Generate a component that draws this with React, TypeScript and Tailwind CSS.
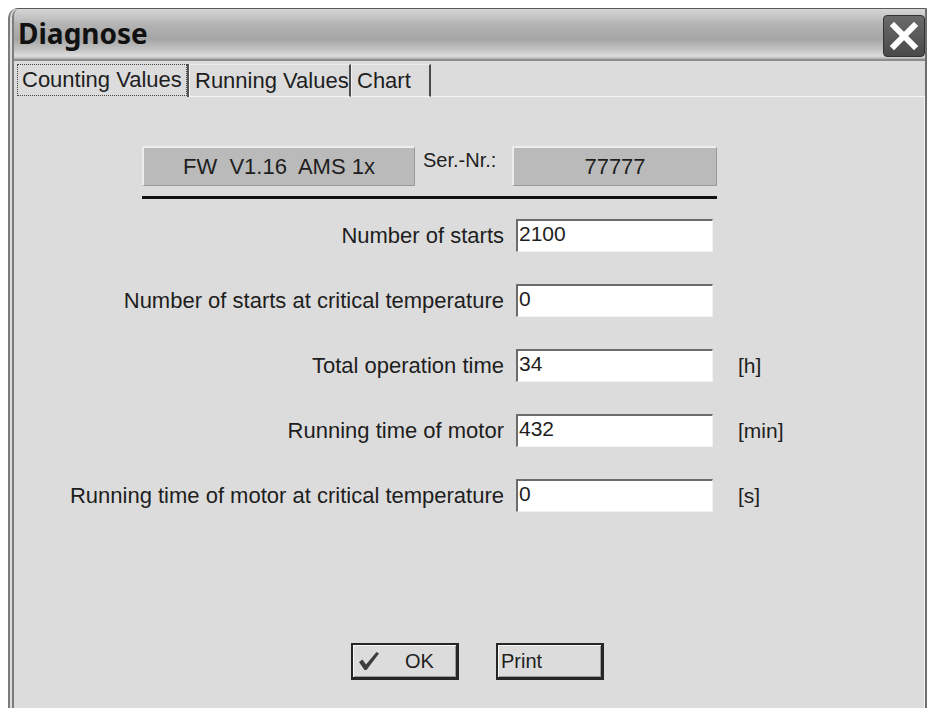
import { useState } from 'react';

type Row = { label: string; value: string; unit?: string };

const rows: Row[] = [
  { label: 'Number of starts', value: '2100' },
  { label: 'Number of starts at critical temperature', value: '0' },
  { label: 'Total operation time', value: '34', unit: '[h]' },
  { label: 'Running time of motor', value: '432', unit: '[min]' },
  { label: 'Running time of motor at critical temperature', value: '0', unit: '[s]' },
];

const tabs = ['Counting Values', 'Running Values', 'Chart'];

function CheckMark() {
  return (
    <svg width="22" height="20" viewBox="0 0 22 20" className="shrink-0">
      <path d="M1 11 L4.5 8.5 L8 13.5 L18.5 1 L21 2.5 L8.5 19 L6.5 19 Z" fill="#3c3c3c" />
    </svg>
  );
}

export default function App() {
  const [tab, setTab] = useState(0);

  return (
    <div className="min-h-screen bg-white pl-2 pt-2 font-['Liberation_Sans',Arial,sans-serif] text-[#1e1e1e]">
      <div className="flex h-[700px] w-[919px] flex-col overflow-hidden rounded-tl-[10px] border-t border-r-2 border-l-[6px] border-double border-t-[#5a5a5a] border-r-[#6e6e6e] border-l-[#7c7c7c] bg-[#dcdcdc]">
        {/* title bar */}
        <div className="flex h-[52px] shrink-0 items-start justify-between border-b-2 border-b-[#8c8c8c] bg-[linear-gradient(to_bottom,#d6d6d6_0%,#b4b4b4_30%,#a5a5a5_60%,#c4c4c4_82%,#dedede_94%,#b0b0b0_100%)] pl-1">
          <span className="mt-[6px] font-['Noto_Sans',sans-serif] text-[28px] leading-[36px] font-bold text-[#111]">
            Diagnose
          </span>
          <button className="mt-[6px] flex h-[42px] w-[42px] items-center justify-center rounded-[4px] border border-[#333] bg-[linear-gradient(to_bottom,#6a6a6a,#4a4a4a)]">
            <svg width="32" height="32" viewBox="0 0 32 32">
              <path d="M6 6 L26 26 M26 6 L6 26" stroke="#fff" strokeWidth="6" strokeLinecap="square" />
            </svg>
          </button>
        </div>

        {/* tabs */}
        <div className="flex h-[36px] shrink-0 items-end pt-[3px]">
          {tabs.map((t, i) =>
            i === tab ? (
              <div key={t} className="ml-[3px] flex h-[33px] items-stretch border-r-2 border-r-[#555] pb-[1px]">
                <span className="flex w-[170px] items-center border border-dotted border-[#444] pl-[4px] text-[22px] leading-none">
                  {t}
                </span>
              </div>
            ) : (
              <button
                key={t}
                onClick={() => setTab(i)}
                className={`flex h-[33px] items-center border-t border-b border-l border-r-2 border-t-[#ececec] border-b-[#f6f6f6] border-l-[#f0f0f0] border-r-[#4a4a4a] pl-[5px] text-[22px] leading-none ${
                  i === 1 ? 'w-[162px]' : 'w-[80px]'
                }`}
              >
                {t}
              </button>
            ),
          )}
          <div className="h-[33px] flex-1 border-b border-b-[#f6f6f6]" />
        </div>

        {/* panel */}
        <div className="flex flex-1 flex-col border-r border-r-[#f4f4f4] pt-[49px]">
          <div className="ml-[128px] flex items-start">
            <div className="flex h-[40px] w-[273px] items-center justify-center border-t-2 border-l-2 border-b border-r border-t-[#ededed] border-l-[#ededed] border-b-[#9a9a9a] border-r-[#9a9a9a] bg-[#bababa] text-[22px] whitespace-pre">
              FW  V1.16  AMS 1x
            </div>
            <span className="mt-[2px] w-[97px] pl-[8px] text-[20px] leading-[24px]">Ser.-Nr.:</span>
            <div className="flex h-[40px] w-[205px] items-center justify-center border-t-2 border-l-2 border-b border-r border-t-[#ededed] border-l-[#ededed] border-b-[#9a9a9a] border-r-[#9a9a9a] bg-[#bababa] text-[22px]">
              77777
            </div>
          </div>
          <div className="mt-[10px] ml-[128px] h-[3px] w-[575px] bg-[#111]" />

          <div className="mt-[20px] grid grid-cols-[502px_197px_auto] gap-y-[32px]">
            {rows.map((r) => (
              <div key={r.label} className="contents">
                <label className="flex items-center justify-end pr-[12px] text-[22px]">{r.label}</label>
                <div className="h-[33px] border-t-2 border-l-2 border-b border-r border-t-[#6c6c6c] border-l-[#6c6c6c] border-b-[#f2f2f2] border-r-[#f2f2f2] bg-white pt-[1px] pl-[1px] text-[21px] leading-[24px]">
                  {r.value}
                </div>
                <span className="flex items-center pl-[25px] text-[21px]">{r.unit}</span>
              </div>
            ))}
          </div>

          <div className="mt-[131px] ml-[337px] flex gap-[37px]">
            <button className="flex h-[37px] w-[108px] items-center border-2 border-r-[3px] border-b-[3px] border-[#262626] pl-[5px] text-[20px] shadow-[inset_1px_1px_0_#f8f8f8,inset_-1px_-1px_0_#9a9a9a]">
              <CheckMark />
              <span className="ml-[25px]">OK</span>
            </button>
            <button className="flex h-[37px] w-[108px] items-center border-2 border-r-[3px] border-b-[3px] border-[#262626] pl-[3px] text-[20px] shadow-[inset_1px_1px_0_#f8f8f8,inset_-1px_-1px_0_#9a9a9a]">
              Print
            </button>
          </div>
        </div>
      </div>
    </div>
  );
}
